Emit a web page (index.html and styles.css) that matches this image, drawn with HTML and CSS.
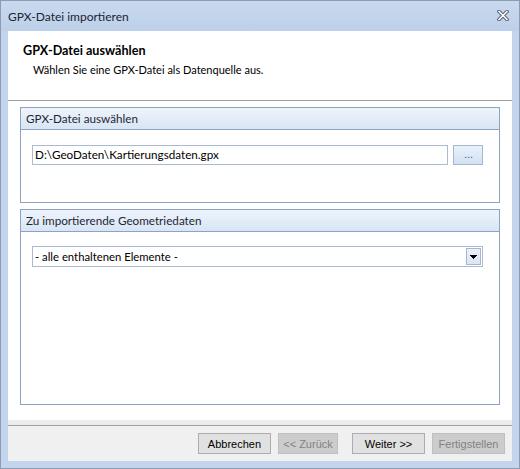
FILE: index.html
```html
<!DOCTYPE html>
<html lang="de">
<head>
<meta charset="utf-8">
<title>GPX-Datei importieren</title>
<link rel="stylesheet" href="styles.css">
</head>
<body>
<div class="window">
  <div class="titlebar">
    <span class="title">GPX-Datei importieren</span>
    <svg class="close" width="12" height="11" viewBox="0 0 12 11">
      <path d="M2 1.5 L10 9.5 M10 1.5 L2 9.5" stroke="#5c6678" stroke-width="3.6" stroke-linecap="square"/>
      <path d="M2 1.5 L10 9.5 M10 1.5 L2 9.5" stroke="#ffffff" stroke-width="1.5" stroke-linecap="square"/>
    </svg>
  </div>
  <div class="client">
    <div class="header">
      <div class="h-title">GPX-Datei auswählen</div>
      <div class="h-sub">Wählen Sie eine GPX-Datei als Datenquelle aus.</div>
    </div>
    <div class="content">
      <section class="group g1">
        <div class="g-head">GPX-Datei auswählen</div>
        <div class="g-body">
          <div class="row">
            <div class="textbox">D:\GeoDaten\Kartierungsdaten.gpx</div>
            <button class="browse"><span class="dots">...</span></button>
          </div>
        </div>
      </section>
      <section class="group g2">
        <div class="g-head">Zu importierende Geometriedaten</div>
        <div class="g-body">
          <div class="combo">
            <span class="combo-text">- alle enthaltenen Elemente -</span>
            <span class="drop">
              <svg width="7" height="5" viewBox="0 0 7 5"><path d="M0 0h7v1H0z M1 1h5v1H1z M2 2h3v1H2z M3 3h1v1H3z" fill="#000"/></svg>
            </span>
          </div>
        </div>
      </section>
    </div>
    <div class="footer">
      <button class="btn">Abbrechen</button>
      <button class="btn disabled btn-back">&lt;&lt; Zurück</button>
      <button class="btn btn-next">Weiter &gt;&gt;</button>
      <button class="btn disabled">Fertigstellen</button>
    </div>
  </div>
</div>
</body>
</html>
```

FILE: styles.css
```css
* { box-sizing: border-box; }
html, body { margin: 0; padding: 0; }
body { width: 520px; height: 469px; overflow: hidden; }

.window {
  width: 520px;
  height: 469px;
  border: 1px solid #8d9cb0;
  background: #c3d5ec;
  display: flex;
  flex-direction: column;
  font-family: Lato, "Liberation Sans", sans-serif;
}

.titlebar {
  height: 30px;
  flex: none;
  display: flex;
  align-items: center;
  justify-content: space-between;
  padding: 0 10px 0 7px;
  background: linear-gradient(#c9daef, #bdd0e9);
}
.title {
  font-size: 12px;
  color: #1a2433;
  padding-top: 1px;
}
.close { display: block; margin-top: -1px; }

.client {
  flex: 1;
  margin: 0 7px 7px 7px;
  background: #fff;
  display: flex;
  flex-direction: column;
}

.header {
  height: 70px;
  flex: none;
  border-bottom: 1px solid #a0a0a0;
  padding: 12px 0 0 15px;
}
.h-title {
  font-size: 12.6px;
  font-weight: bold;
  color: #000;
  line-height: 16px;
}
.h-sub {
  font-size: 11px;
  color: #000;
  line-height: 15px;
  margin-top: 3px;
  padding-left: 10px;
}

.content {
  flex: 1;
  padding: 6px 12px 15px 12px;
  display: flex;
  flex-direction: column;
  gap: 6px;
}

.group {
  border: 1px solid #8ea3c2;
  display: flex;
  flex-direction: column;
}
.g1 { height: 96px; flex: none; }
.g2 { flex: 1; }

.g-head {
  height: 22px;
  flex: none;
  border-bottom: 1px solid #8ea3c2;
  background: linear-gradient(#eef4fc, #d8e5f5);
  font-size: 11.7px;
  color: #1e2633;
  padding: 3px 0 0 5px;
  line-height: 15px;
}
.g-body { padding: 15px 16px 0 11px; }
.g2 .g-body { padding-top: 14px; }

.row { display: flex; gap: 5px; }
.textbox {
  width: 416px;
  height: 20px;
  border: 1px solid #abb9d1;
  font-size: 11.7px;
  line-height: 17px;
  padding-left: 2px;
  color: #000;
}
.browse {
  width: 30px;
  height: 20px;
  border: 1px solid #a4b6d0;
  background: linear-gradient(#e9f1fb, #d4e1f3);
  padding: 0;
  margin: 0;
  position: relative;
}
.dots {
  position: absolute;
  left: 10px;
  top: 2px;
  font-size: 11px;
  font-family: "Liberation Sans", sans-serif;
  color: #3055b0;
}

.combo {
  width: 451px;
  height: 21px;
  border: 1px solid #abb9d1;
  display: flex;
  align-items: center;
  justify-content: space-between;
  padding: 0 1px 0 2px;
}
.combo-text {
  font-size: 11.3px;
  color: #000;
}
.drop {
  width: 15px;
  height: 17px;
  border: 1px solid #a6b6cf;
  background: linear-gradient(#eaf1fa, #dbe5f3);
  display: flex;
  align-items: center;
  justify-content: center;
}
.drop svg { display: block; margin-top: 1px; }

.footer {
  height: 41px;
  flex: none;
  background: #f0f0f0;
  border-top: 5px solid #ececec;
  display: flex;
  align-items: flex-start;
  padding: 0 0 0 190px;
  position: relative;
}
.footer::before {
  content: "";
  position: absolute;
  left: 0;
  right: 0;
  top: 0;
  height: 1px;
  background: #a0a0a0;
}
.btn {
  height: 21px;
  margin-top: 8px;
  border: 1px solid #adadad;
  background: #e1e1e1;
  font-family: "Liberation Sans", Arial, sans-serif;
  font-size: 11px;
  color: #000;
  padding: 0;
  width: 74px;
  margin-right: 7px;
}
.btn.disabled {
  background: #cccccc;
  border-color: #bfbfbf;
  color: #838383;
}
.btn-back { width: 61px; margin-right: 14px; }
.btn-next { width: 74px; }
```
